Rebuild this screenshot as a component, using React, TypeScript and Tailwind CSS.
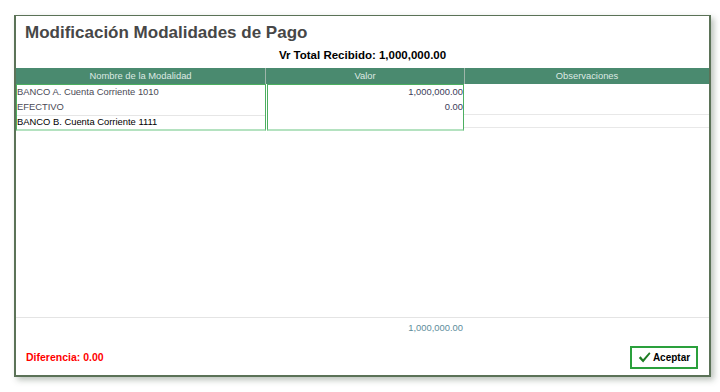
import React from 'react';

interface Fila {
    nombre: string;
    valor: string;
    color: string;
}

const filas: Fila[] = [
    { nombre: 'BANCO A. Cuenta Corriente 1010', valor: '1,000,000.00', color: 'text-[#4a4a55]' },
    { nombre: 'EFECTIVO', valor: '0.00', color: 'text-[#4a4a55]' },
    { nombre: 'BANCO B. Cuenta Corriente 1111', valor: '', color: 'text-black' }
];

const CheckIcon = () => (
    <svg width="13" height="13" viewBox="0 0 16 16" className="shrink-0">
        <path d="M1 8.6 L3.2 6.6 L6.2 10 L13.8 1.6 L15.4 3 L6.3 14.2 Z" fill="#1e7d23" />
    </svg>
);

const App: React.FC = () => {
    return (
        <div className="w-[720px] h-[392px] bg-white pt-[15px] pl-[14px] font-['Liberation_Sans',Arial,sans-serif]">
            {/* Ventana */}
            <div className="w-[697px] h-[362px] flex flex-col bg-white border-l-2 border-t border-r-2 border-b-2 border-[#5b7257] shadow-[3px_3px_6px_rgba(60,80,60,0.35)]">
                {/* Titulo */}
                <div className="h-[28px] pl-[9px] pt-[7px]">
                    <h1 className="text-[17px] leading-[20px] font-bold text-[#474747]">Modificación Modalidades de Pago</h1>
                </div>

                <div className="h-[24px] flex items-center justify-center">
                    <span className="text-[11.5px] font-bold text-black">Vr Total Recibido: 1,000,000.00</span>
                </div>

                {/* Encabezado tabla */}
                <div className="h-[16px] grid grid-cols-[250px_199px_1fr] bg-[#4a8a6f] text-[9.4px] text-[#dde9e3]">
                    <div className="flex items-center justify-center border-r border-[#9fb5aa]">Nombre de la Modalidad</div>
                    <div className="flex items-center justify-center border-r border-[#9fb5aa]">Valor</div>
                    <div className="flex items-center justify-center">Observaciones</div>
                </div>

                {/* Cuerpo */}
                <div className="flex-1 flex items-start text-[9.4px]">
                    <div className="w-[250px] border border-[#4caf60] border-b-2 border-b-[#b4e2c0]">
                        {filas.map((f, i) => (
                            <div
                                key={i}
                                className={`flex items-center ${f.color} ${i === 2 ? 'border-t border-[#e6e6e6] h-[14px]' : 'h-[15px]'}`}
                            >
                                {f.nombre}
                            </div>
                        ))}
                    </div>
                    <div className="w-[197px] ml-[1px] border border-[#4caf60] border-b-2 border-b-[#b4e2c0]">
                        {filas.map((f, i) => (
                            <div
                                key={i}
                                className={`flex items-center justify-end text-[#3c3c5a] ${i === 2 ? 'h-[14px]' : 'h-[15px]'}`}
                            >
                                {f.valor}
                            </div>
                        ))}
                    </div>
                    <div className="flex-1 pt-[30px]">
                        <div className="h-[14px] border-t border-b border-[#e8e8e8]"></div>
                    </div>
                </div>

                {/* Totales */}
                <div className="h-[22px] grid grid-cols-[250px_197px_1fr] border-t border-[#e4e4e4] text-[9.4px]">
                    <div></div>
                    <div className="flex items-center justify-end text-[#5e8d9b]">1,000,000.00</div>
                    <div></div>
                </div>

                {/* Pie */}
                <div className="h-[36px] flex items-center justify-between pl-[10px] pr-[11px]">
                    <span className="text-[10.5px] font-bold text-[#ff0000] mt-[2px]">Diferencia: 0.00</span>
                    <button className="w-[68px] h-[23px] flex items-center justify-center gap-[2px] border-2 border-[#2aa03c] bg-white">
                        <CheckIcon />
                        <span className="text-[10px] font-bold text-black">Aceptar</span>
                    </button>
                </div>
            </div>
        </div>
    );
};

export default App;
